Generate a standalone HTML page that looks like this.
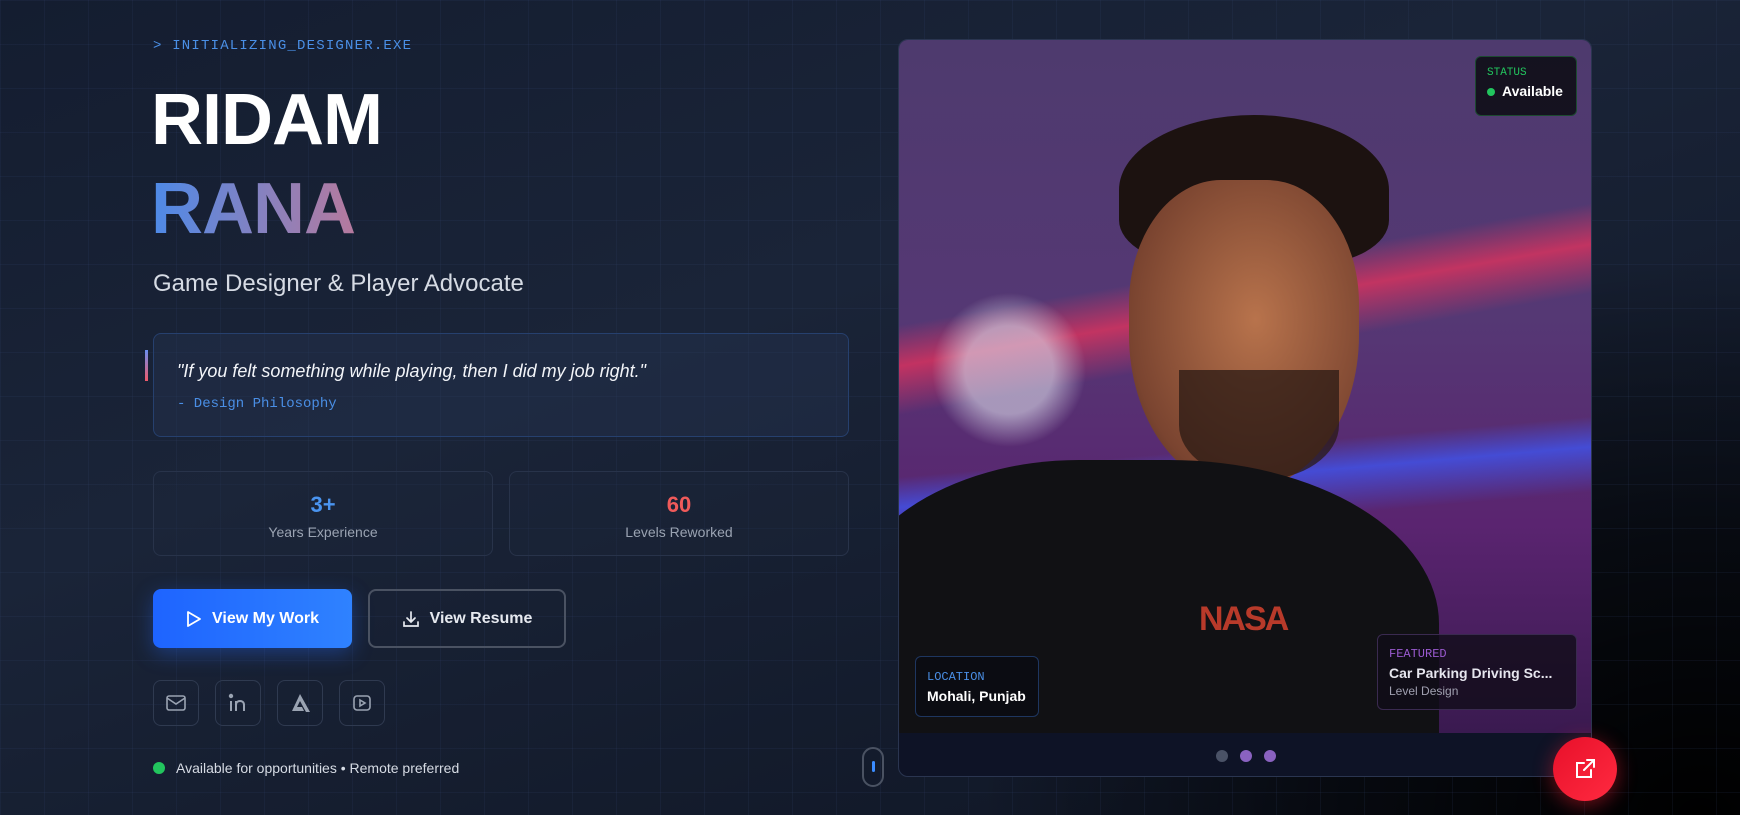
<!DOCTYPE html>
<html><head><meta charset="utf-8"><style>
*{margin:0;padding:0;box-sizing:border-box}
html,body{width:1740px;height:815px;overflow:hidden}
body{font-family:"Liberation Sans",sans-serif;position:relative;
background:radial-gradient(ellipse 900px 700px at 1700px 815px,#000 0%,rgba(0,0,0,.6) 40%,rgba(0,0,0,0) 80%),linear-gradient(160deg,#141d30 0%,#1a2438 40%,#0e1422 100%);}
.grid{position:absolute;inset:0;background-image:linear-gradient(rgba(60,80,130,.12) 1px,transparent 1px),linear-gradient(90deg,rgba(60,80,130,.12) 1px,transparent 1px);background-size:44px 44px}
.abs{position:absolute}
.mono{font-family:"Liberation Mono",monospace}
.pre{left:153px;top:38px;color:#4a8fe6;font-size:14px;letter-spacing:1.2px}
.h1{left:151px;font-weight:bold;font-size:72px;line-height:1;letter-spacing:-1px}
.sub{left:153px;top:270px;color:#d6dbe4;font-size:24px}
.quote{left:153px;top:333px;width:696px;height:104px;border:1px solid #26406e;border-radius:8px;background:rgba(40,55,85,.35)}
.stat{top:471px;width:340px;height:85px;border:1px solid #28334a;border-radius:8px;background:rgba(30,40,60,.3);text-align:center}
.stat b{display:block;margin-top:20px;font-size:22px}
.stat span{display:block;margin-top:6px;font-size:14px;color:#9aa3b2}
.btn{top:589px;height:59px;border-radius:8px;display:flex;align-items:center;justify-content:center;gap:10px;color:#fff;font-weight:bold;font-size:16px}
.soc{top:680px;width:46px;height:46px;border:1px solid #2f3a50;border-radius:8px;display:flex;align-items:center;justify-content:center}
.card{left:898px;top:39px;width:694px;height:738px;border:1px solid #2a3550;border-radius:10px;overflow:hidden;background:#0e1326}
.photo{position:absolute;left:0;top:0;width:694px;height:693px;overflow:hidden;
background:radial-gradient(ellipse 110px 110px at 110px 330px,rgba(220,220,235,.6) 40%,transparent 70%),
linear-gradient(170deg,transparent 35%,rgba(240,50,90,.7) 40%,transparent 46%),
linear-gradient(175deg,transparent 58%,rgba(60,90,255,.7) 62%,transparent 68%),
linear-gradient(180deg,#4e3a6e 0%,#553874 40%,#5a2470 70%,#3a1a50 100%)}
.badge{position:absolute;background:rgba(10,12,18,.85);border-radius:6px;padding:10px 11px}
</style></head><body>
<div class="grid"></div>
<div class="abs mono pre">&gt; INITIALIZING_DESIGNER.EXE</div>
<div class="abs h1" style="top:84px;color:#fff">RIDAM</div>
<div class="abs h1" style="top:173px;background:linear-gradient(90deg,#4d8ae8,#b67a9e);-webkit-background-clip:text;background-clip:text;color:transparent">RANA</div>
<div class="abs sub">Game Designer &amp; Player Advocate</div>
<div class="abs quote"></div>
<div class="abs" style="left:145px;top:350px;width:3px;height:31px;background:linear-gradient(#6a8ff0,#f05a6a)"></div>
<div class="abs" style="left:177px;top:361px;color:#f2f4f8;font-size:18px;font-style:italic">"If you felt something while playing, then I did my job right."</div>
<div class="abs mono" style="left:177px;top:396px;color:#4a8fe6;font-size:14px">- Design Philosophy</div>
<div class="abs stat" style="left:153px"><b style="color:#4a94f0">3+</b><span>Years Experience</span></div>
<div class="abs stat" style="left:509px"><b style="color:#f05a5a">60</b><span>Levels Reworked</span></div>
<div class="abs btn" style="left:153px;width:199px;background:linear-gradient(90deg,#1e64ff,#2f82ff);box-shadow:0 6px 20px rgba(40,110,255,.35)">
<svg width="16" height="18" viewBox="0 0 16 18"><path d="M2 2 L14 9 L2 16 Z" fill="none" stroke="#fff" stroke-width="1.8" stroke-linejoin="round"/></svg>View My Work</div>
<div class="abs btn" style="left:368px;width:198px;border:2px solid #4a5262;color:#e6e9ef">
<svg width="18" height="18" viewBox="0 0 18 18" fill="none" stroke="#e6e9ef" stroke-width="1.7" stroke-linecap="round"><path d="M9 2v10M5 8l4 4 4-4M2 12v4h14v-4"/></svg>View Resume</div>
<div class="abs soc" style="left:153px"><svg width="20" height="16" viewBox="0 0 20 16" fill="none" stroke="#9aa3b2" stroke-width="1.6"><rect x="1" y="1" width="18" height="14" rx="2"/><path d="M1 3l9 6 9-6"/></svg></div>
<div class="abs soc" style="left:215px"><svg width="20" height="20" viewBox="0 0 20 20" fill="none" stroke="#9aa3b2" stroke-width="2"><circle cx="3" cy="3" r="1.2" fill="#9aa3b2"/><path d="M3 8v10M8 18v-10M8 12c0-3 2-4 4-4s4 1 4 4v6"/></svg></div>
<div class="abs soc" style="left:277px"><svg width="22" height="20" viewBox="0 0 22 20" fill="#9aa3b2"><path d="M11 1l10 18h-4L11 8 8 14h5l2 4H3z"/></svg></div>
<div class="abs soc" style="left:339px"><svg width="20" height="18" viewBox="0 0 20 18" fill="none" stroke="#9aa3b2" stroke-width="1.6"><rect x="2" y="2" width="16" height="14" rx="3"/><path d="M8 6l5 3-5 3z"/></svg></div>
<div class="abs" style="left:153px;top:762px;width:12px;height:12px;border-radius:50%;background:#22c55e"></div>
<div class="abs" style="left:176px;top:760px;color:#d6dbe4;font-size:14px">Available for opportunities • Remote preferred</div>
<div class="abs" style="left:862px;top:747px;width:22px;height:40px;border:2px solid #4a5262;border-radius:11px"><div style="margin:12px auto 0;width:3px;height:11px;background:#3b8cff;border-radius:2px"></div></div>

<div class="abs card">
 <div class="photo">
  <div class="abs" style="left:220px;top:75px;width:270px;height:150px;border-radius:50% 50% 30% 30%;background:#1c1210"></div>
  <div class="abs" style="left:230px;top:140px;width:230px;height:310px;border-radius:40% 40% 50% 50%;background:radial-gradient(ellipse at 55% 45%,#b8734c,#7a4430 70%,#3a2218)"></div>
  <div class="abs" style="left:280px;top:330px;width:160px;height:110px;border-radius:0 0 50% 50%;background:#2a1a14;opacity:.75"></div>
  <div class="abs" style="left:-60px;top:420px;width:600px;height:273px;border-radius:40% 45% 0 0 / 60% 60% 0 0;background:#111114"></div>
  <div class="abs" style="left:300px;top:560px;color:#b83a2a;font-weight:bold;font-size:34px;letter-spacing:-2px">NASA</div>
 </div>
 <div class="badge" style="left:576px;top:16px;width:102px;height:60px;border:1px solid #1c4a30">
  <div class="mono" style="color:#22c55e;font-size:11px">STATUS</div>
  <div style="color:#fff;font-weight:bold;font-size:14px;margin-top:4px"><span style="display:inline-block;width:8px;height:8px;border-radius:50%;background:#22c55e;margin-right:7px"></span>Available</div>
 </div>
 <div class="badge" style="left:16px;top:616px;width:124px;height:61px;border:1px solid #1e3660">
  <div class="mono" style="color:#4a8fe6;font-size:12px;margin-top:3px">LOCATION</div>
  <div style="color:#fff;font-weight:bold;font-size:14px;margin-top:4px">Mohali, Punjab</div>
 </div>
 <div class="badge" style="left:478px;top:594px;width:200px;height:76px;border:1px solid #3a2a50;background:rgba(16,12,24,.8)">
  <div class="mono" style="color:#9a5ad0;font-size:12px;margin-top:2px">FEATURED</div>
  <div style="color:#e6e6ee;font-weight:bold;font-size:14px;margin-top:4px;white-space:nowrap">Car Parking Driving Sc...</div>
  <div style="color:#a0a0b0;font-size:12px;margin-top:3px">Level Design</div>
 </div>
 <div class="abs" style="left:317px;top:710px;width:12px;height:12px;border-radius:50%;background:#4a5266"></div>
 <div class="abs" style="left:341px;top:710px;width:12px;height:12px;border-radius:50%;background:#8a62c0"></div>
 <div class="abs" style="left:365px;top:710px;width:12px;height:12px;border-radius:50%;background:#8a62c0"></div>
</div>
<div class="abs" style="left:1553px;top:737px;width:64px;height:64px;border-radius:50%;background:linear-gradient(135deg,#e8102a,#ff2a40);box-shadow:0 4px 20px rgba(255,30,50,.45);display:flex;align-items:center;justify-content:center">
<svg width="22" height="22" viewBox="0 0 22 22" fill="none" stroke="#fff" stroke-width="2" stroke-linecap="round"><path d="M17 12v7H3V5h7M13 2h7v7M20 2L10 12"/></svg></div>
</body></html>
